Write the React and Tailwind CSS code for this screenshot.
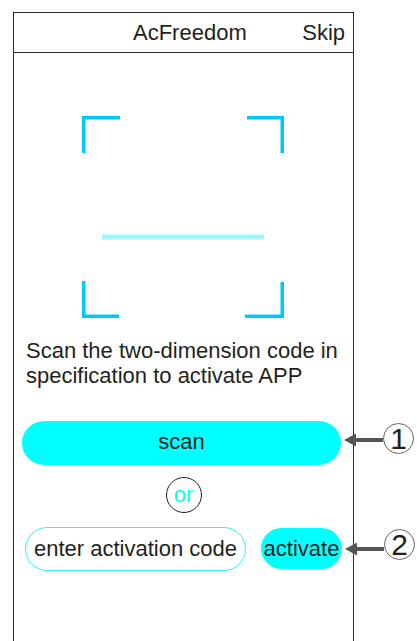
import React from 'react';

// Callout used in the manual: grey arrow pointing left plus a circled number
const Callout = ({ num, arrowTop, className }) => (
  <div className={`absolute flex items-start ${className}`}>
    <svg width="39" height="14" viewBox="0 0 39 14" style={{ marginTop: arrowTop }}>
      <polygon points="0,7 12,0.5 12,13.5" fill="#555" />
      <rect x="10" y="5" width="29" height="4" fill="#555" />
    </svg>
    <span className="w-[31px] h-[31px] rounded-full border border-[#666] flex items-center justify-center text-[30px] leading-none text-[#231f20] pt-[1px]">
      {num}
    </span>
  </div>
);

const Scanner = () => (
  <svg width="203" height="203" viewBox="0 0 203 203" className="mx-auto block">
    {/* top left */}
    <rect x="0" y="0" width="38" height="3.5" fill="#00c8fa" />
    <rect x="0" y="0" width="3.5" height="37" fill="#00c8fa" />
    {/* top right */}
    <rect x="165" y="0" width="37" height="3.5" fill="#00c8fa" />
    <rect x="198.5" y="0" width="3.5" height="37" fill="#00c8fa" />
    {/* bottom left */}
    <rect x="0" y="165" width="3.5" height="37" fill="#00c8fa" />
    <rect x="0" y="198.5" width="37" height="3.5" fill="#00c8fa" />
    {/* bottom right */}
    <rect x="198.5" y="166" width="3.5" height="36" fill="#00c8fa" />
    <rect x="163" y="198.5" width="39" height="3.5" fill="#00c8fa" />
    {/* scan line */}
    <rect x="20" y="118" width="162" height="6" fill="#c6fcff" />
    <rect x="20" y="119.5" width="162" height="3" fill="#96f6fd" />
  </svg>
);

const App = () => {
  return (
    <div className="relative w-[417px] h-[641px] bg-white overflow-hidden font-['Liberation_Sans',Arial,sans-serif] text-[#231f20] text-[22px] leading-[25px]">
      <div className="ml-[13px] mt-[11.5px] w-[341px] h-[640px] border-x-[1.5px] border-t-[1.5px] border-[#2b2b2b]">
        <div className="h-[40px] border-b-[1.5px] border-[#2b2b2b] flex items-center">
          <span className="ml-[119px]">AcFreedom</span>
          <span className="ml-auto mr-[8px]">Skip</span>
        </div>

        <div className="mt-[63px]">
          <Scanner />
        </div>

        <p className="mt-[19px] px-[12px]">
          Scan the two-dimension code in specification to activate APP
        </p>

        <div className="relative mt-[33px] ml-[8px] w-[319px]">
          <button className="w-full h-[44px] rounded-full bg-[#00ffff] pb-[3px]">scan</button>
          <Callout num="1" arrowTop={10} className="left-[322px] top-[2px]" />
        </div>

        <div className="mt-[12px] mx-auto w-[36px] h-[36px] rounded-full border-[1.5px] border-[#231f20] flex items-center justify-center text-[#00ffff]">
          or
        </div>

        <div className="mt-[14px] ml-[11px] flex items-center">
          <div className="w-[221px] h-[44px] rounded-full border-[1.5px] border-[#2ef2ff] flex items-center justify-center">
            enter activation code
          </div>
          <div className="relative ml-[15px]">
            <button className="w-[81px] h-[41px] rounded-full bg-[#00ffff]">activate</button>
            <Callout num="2" arrowTop={13} className="left-[84px] top-[1px]" />
          </div>
        </div>
      </div>
    </div>
  );
};

export default App;
